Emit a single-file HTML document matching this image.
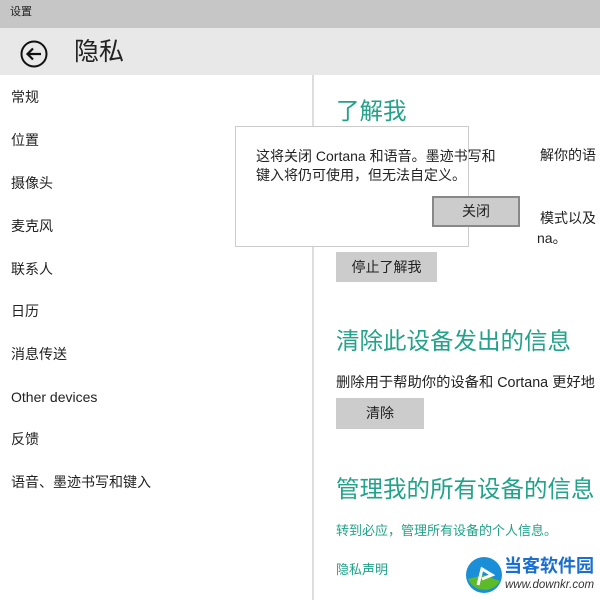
<!DOCTYPE html>
<html><head><meta charset="utf-8"><style>
*{margin:0;padding:0;box-sizing:border-box}
body{width:600px;height:600px;overflow:hidden;background:#fff;position:relative;font-family:"Liberation Sans","Noto Sans CJK SC",sans-serif;color:#222}
.a{position:absolute;white-space:nowrap;line-height:1}
.nav{font-size:14px;left:11px}
.t{color:#22a288}
.h{font-size:23.5px}
.btn{position:absolute;background:#ccc;font-size:14px;text-align:center}
</style></head><body>
<div class="a" style="left:0;top:0;width:600px;height:28px;background:#c6c6c6"></div>
<div class="a" style="left:10px;top:7px;font-size:11px">设置</div>
<div class="a" style="left:0;top:28px;width:600px;height:47px;background:#e8e8e8"></div>
<svg style="position:absolute;left:18px;top:38px" width="32" height="32" viewBox="0 0 32 32"><circle cx="16" cy="16" r="12.5" fill="none" stroke="#111" stroke-width="2"/><path d="M23 16H10M15 10.5L9.5 16L15 21.5" fill="none" stroke="#111" stroke-width="2.2"/></svg>
<div class="a" style="left:74px;top:40px;font-size:25px">隐私</div>
<div class="a" style="left:312px;top:75px;width:2px;height:525px;background:#ddd"></div>
<div class="a nav" style="top:90px">常规</div>
<div class="a nav" style="top:133px">位置</div>
<div class="a nav" style="top:176px">摄像头</div>
<div class="a nav" style="top:219px">麦克风</div>
<div class="a nav" style="top:262px">联系人</div>
<div class="a nav" style="top:304px">日历</div>
<div class="a nav" style="top:347px">消息传送</div>
<div class="a nav" style="top:390px">Other devices</div>
<div class="a nav" style="top:432px">反馈</div>
<div class="a nav" style="top:475px">语音、墨迹书写和键入</div>
<div class="a t h" style="left:336px;top:100px">了解我</div>
<div class="a" style="left:540px;top:148px;font-size:14px">解你的语</div>
<div class="a" style="left:540px;top:211px;font-size:14px">模式以及</div>
<div class="a" style="left:537px;top:231px;font-size:14px">na。</div>
<div class="btn" style="left:336px;top:252px;width:101px;height:30px;line-height:30px">停止了解我</div>
<div class="a" style="left:235px;top:126px;width:234px;height:121px;background:#fff;border:1px solid #ccc"></div>
<div class="a" style="left:256px;top:147px;font-size:14px;line-height:19px">这将关闭 Cortana 和语音。墨迹书写和<br>键入将仍可使用，但无法自定义。</div>
<div class="btn" style="left:432px;top:196px;width:88px;height:31px;line-height:27px;border:2px solid #888;background:#ccc">关闭</div>
<div class="a t h" style="left:336px;top:330px">清除此设备发出的信息</div>
<div class="a" style="left:336px;top:376px;font-size:14.3px">删除用于帮助你的设备和 Cortana 更好地</div>
<div class="btn" style="left:336px;top:398px;width:88px;height:31px;line-height:31px">清除</div>
<div class="a t h" style="left:336px;top:478px">管理我的所有设备的信息</div>
<div class="a t" style="left:336px;top:524px;font-size:13px">转到必应，管理所有设备的个人信息。</div>
<div class="a t" style="left:336px;top:563px;font-size:13px">隐私声明</div>
<svg style="position:absolute;left:464px;top:555px" width="40" height="40" viewBox="0 0 40 40"><circle cx="20" cy="20" r="18" fill="#1a8fd8"/><path d="M4 24A18 18 0 0 0 36 26L20 20Z" fill="#5dbb2a"/><path d="M14 30L18 14L28 20L18 24" fill="none" stroke="#fff" stroke-width="3"/></svg>
<div class="a" style="left:504px;top:557px;font-size:18px;font-weight:bold;color:#1a6fd0">当客软件园</div>
<div class="a" style="left:505px;top:580px;font-size:11.5px;font-style:italic;color:#333">www.downkr.com</div>
</body></html>
